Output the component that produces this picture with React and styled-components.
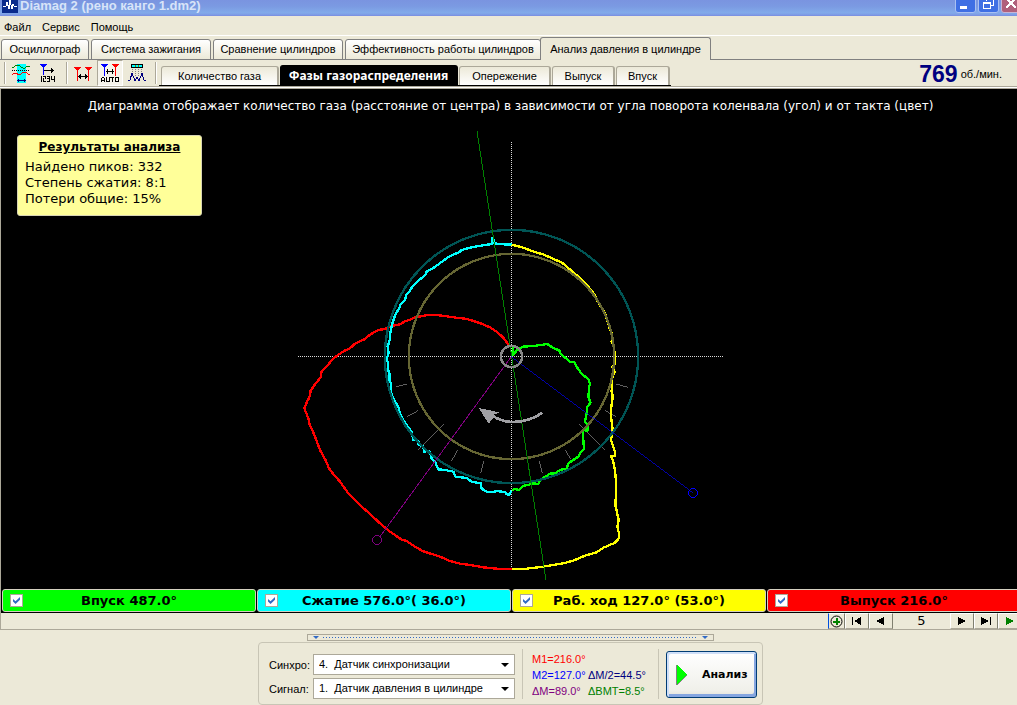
import React, { useState } from 'react';
import styled, { createGlobalStyle, css } from 'styled-components';

const ui = '"Liberation Sans", Arial, sans-serif';
const wide = '"DejaVu Sans", Verdana, sans-serif';

const GlobalStyle = createGlobalStyle`
  * { box-sizing: border-box; }
  html { overflow: hidden; }
  body {
    margin: 0;
    min-height: 100vh;
    overflow: hidden;
    background: #ece9d8;
    color: #000;
    font: 11px/14px ${ui};
  }
  button, select, input { font: inherit; color: inherit; margin: 0; padding: 0; }
  h1, h2, p { margin: 0; font: inherit; }
`;

/* The maximised window runs a little past the right screen edge. */
const Window = styled.div`
  margin-right: -6px;
  background: #ece9d8;
`;

const TitleBar = styled.header`
  display: flex;
  align-items: flex-end;
  height: 16px;
  padding: 0 1px 3px 2px;
  overflow: hidden;
  background: linear-gradient(#7a94e0 0%, #7b9ae2 40%, #82aaea 80%, #7f9fe6 90%, #7a8ce0 100%);
`;
const Title = styled.h1`
  flex: 1;
  margin-left: 2px;
  padding-bottom: 1px;
  color: #d8e4f8;
  font: bold 13px/12px ${ui};
`;
const CaptionButtons = styled.div`
  display: flex;
  gap: 2px;
`;
const CaptionButton = styled.button`
  width: 21px;
  height: 21px;
  border: 1px solid;
  border-color: ${p => (p.$close ? '#c8b4d4' : '#a9c0f2')};
  border-radius: 3px;
  background: ${p => (p.$close ? '#b0607c' : '#3f6fe4')};
  svg { display: block; }
`;

const MenuBar = styled.nav`
  display: flex;
  gap: 11px;
  height: 20px;
  padding: 2px 4px 0;
  border-bottom: 1px solid #fff;
`;
const MenuItem = styled.button`
  border: 0;
  background: none;
  line-height: 14px;
`;

const TabRow = styled.div`
  display: flex;
  align-items: flex-end;
  gap: 2px;
  height: 24px;
  padding-left: 1px;
  box-shadow: inset 0 -1px #808080;
`;
const Tab = styled.button`
  width: ${p => p.$width}px;
  height: 21px;
  padding-bottom: 1px;
  border: 1px solid #808080;
  border-radius: 3px 3px 0 0;
  background: linear-gradient(#fff, #ece9d8);
  white-space: nowrap;
  ${p => p.$active && css`
    height: 23px;
    margin-left: -3px;
    border-bottom: 0;
    background: #ece9d8;
  `}
`;

const Toolbar = styled.div`
  display: flex;
  gap: 1px;
  height: 29px;
  border-bottom: 1px solid #aca899;
  box-shadow: inset 0 -1px #fff, inset 0 -2px #aca899;
`;
const Separator = styled.span`
  width: 2px;
  height: 22px;
  margin: 2px 1px 0 4px;
  border-left: 1px solid #aca899;
  border-right: 1px solid #fff;
`;
const ToolButton = styled.button`
  display: grid;
  place-items: center;
  width: 26px;
  height: 26px;
  border: 1px solid transparent;
  background: none;
  ${p => p.$pressed && css`
    border-color: #aca899 #fff #fff #aca899;
    background: #f6f4ec;
  `}
`;
const SubTabRow = styled.div`
  display: flex;
  align-items: flex-end;
  gap: 1px;
  height: 26px;
  padding: 0 1px 1px 2px;
  box-shadow: inset 0 -1px #000;
`;
const SubTab = styled.button`
  width: ${p => p.$width}px;
  height: 19px;
  border: 1px solid #aca899;
  border-width: 1px 2px 0 1px;
  border-radius: 3px 3px 0 0;
  background: linear-gradient(#ece9d8, #fff);
  white-space: nowrap;
  ${p => p.$active && css`
    height: 20px;
    border-color: #000;
    background: #000;
    color: #fff;
    font: bold 12px/14px "Noto Sans", ${ui};
  `}
`;
const Rpm = styled.div`
  display: flex;
  align-items: center;
  gap: 3px;
  height: 28px;
  margin-left: auto;
  padding-right: 21px;
  strong { color: #000080; font-size: 23px; line-height: 28px; }
`;

const Work = styled.main`
  border: 1px solid #aca899;
  border-width: 0 0 1px 1px;
`;
const Canvas = styled.section`
  position: relative;
  background: #000;
`;
const CanvasCaption = styled.p`
  height: 31px;
  padding: 1px 3px 0 0;
  color: #fff;
  font: 12px/32px ${wide};
  text-align: center;
  white-space: nowrap;
`;
const Results = styled.aside`
  position: absolute;
  left: 16px;
  top: 46px;
  width: 185px;
  padding: 3px 7px 8px;
  border: 1px solid #d8d4b4;
  border-radius: 3px;
  background: #ffff99;
  font: 13px/16px ${wide};
  white-space: nowrap;
`;
const ResultsTitle = styled.h2`
  margin-bottom: 4px;
  font: bold 12px/16px ${wide};
  text-align: center;
  text-decoration: underline;
`;
const Dial = styled.svg`
  display: block;
  width: 444px;
  height: 469px;
  margin: 0 auto;
`;

const Phases = styled.div`
  display: grid;
  grid-template-columns: repeat(4, 1fr);
  gap: 1px;
  padding: 0 2px 1px 1px;
  background: #000;
`;
const Phase = styled.label`
  display: grid;
  grid-template-columns: 1fr auto 1fr;
  align-items: center;
  height: 23px;
  padding: 0 7px;
  border: 1px solid #d4d0c0;
  border-radius: 3px;
  background: ${p => p.$color};
  font: bold 13px/16px ${wide};
  white-space: nowrap;
`;
const Check = styled.input`
  appearance: none;
  display: grid;
  place-items: center;
  width: 13px;
  height: 13px;
  border: 1px solid #aca899;
  background: #fff;
  &:checked::before {
    content: '';
    width: 7px;
    height: 7px;
    background: #316ac5;
    clip-path: polygon(0 28%, 36% 62%, 100% 0, 100% 38%, 36% 100%, 0 66%);
  }
`;

const Pager = styled.div`
  display: flex;
  justify-content: flex-end;
  height: 16px;
  padding-right: 1px;
`;
const PagerButton = styled.button`
  display: grid;
  place-items: center;
  width: ${p => (p.$small ? 17 : 24)}px;
  border: 1px solid;
  border-color: #fff #808070 #aca899 #fff;
  background: #ece9d8;
  ${p => p.$small && css`border-left-color: #0050e0;`}
`;
const PageNumber = styled.output`
  width: 57px;
  font: 13px/16px ${wide};
  text-align: center;
`;

const Footer = styled.footer`
  padding: 4px 2px 0 0;
`;
const Splitter = styled.div`
  display: flex;
  align-items: center;
  gap: 4px;
  width: 407px;
  height: 7px;
  margin: 0 auto 1px;
  padding: 0 5px;
  border: 1px solid #aca899;
`;
const SplitterDots = styled.span`
  flex: 1;
  height: 1px;
  background: repeating-linear-gradient(90deg, #316ac5 0 1px, transparent 1px 3px);
`;
const Panel = styled.form`
  display: flex;
  align-items: center;
  width: 505px;
  height: 63px;
  margin: 0 auto;
  padding: 0 5px 0 10px;
  border: 1px solid #c8c5b5;
  border-radius: 4px;
`;
const Fields = styled.div`
  display: grid;
  grid-template-columns: 44px 202px;
  row-gap: 3px;
  align-items: center;
  padding-top: 6px;
`;
const SelectBox = styled.span`
  display: grid;
  align-items: center;
  > * { grid-area: 1 / 1; }
  svg { justify-self: end; margin-right: 6px; pointer-events: none; }
`;
const Select = styled.select`
  appearance: none;
  height: 21px;
  padding: 0 20px 1px 5px;
  border: 1px solid #aca899;
  border-radius: 0;
  background: #fff;
`;
const PanelRule = styled.span`
  width: 1px;
  height: 50px;
  margin-left: 7px;
  background: #c8c5b5;
`;
const Markers = styled.div`
  display: grid;
  grid-template-columns: 56px 1fr;
  width: 128px;
  padding: 2px 0 0 9px;
  line-height: 16px;
  white-space: nowrap;
`;
const Marker = styled.span`
  grid-column: ${p => p.$column || 1};
  color: ${p => p.$color};
`;
const AnalyzeButton = styled.button`
  display: flex;
  align-items: center;
  gap: 15px;
  width: 91px;
  height: 47px;
  margin: 2px 0 0 auto;
  padding-left: 9px;
  border: 1px solid #003c74;
  border-radius: 3px;
  background: linear-gradient(#fff, #f0f0ea 85%, #e4e2d8);
  box-shadow: inset 2px 2px #cfdff8, inset -2px -3px #86a6e0;
  font: bold 11px/14px ${wide};
`;

/* Traces are sampled at three units per pixel, in four quadrants around the shaft. */
const quadrants = { tl: [0, 300], tr: [630, 300], bl: [0, 810], br: [630, 810] };
const traces = [
  ['tl', '#ff0000', '657,376 640,353 622,337 600,322 575,311 545,301 525,296 505,294 470,289 440,285 410,285 400,288 378,291 360,299 345,304 330,313 300,319 285,327 265,330 240,344 225,357 195,371 180,385 162,393 150,401 140,408 125,420 118,430 100,448 92,460 92,472 75,493 62,512 60,525 55,540'],
  ['bl', '#ff0000', '63,0 60,15 50,38 43,55 55,85 60,108 65,115 75,140 90,180 108,213 117,235 130,252 150,275 175,310 215,350 240,372 270,400 300,425 335,449 350,453 375,470 400,484 450,500 480,513 510,521 540,525 580,532 620,536 665,537'],
  ['tl', '#00ffff', '665,74 640,73 613,70 609,54 606,54 606,72 585,75 545,82 515,90 507,97 480,108 460,122 440,137 425,147 410,155 408,163 390,178 378,190 365,203 358,215 348,225 346,238 332,252 328,265 318,280 312,295 305,318 301,340 299,360 293,380 296,400 290,415 294,430 293,445 298,460 298,480 303,490 303,515 310,540'],
  ['bl', '#00ffff', '300,0 306,18 315,35 325,50 330,70 340,90 350,105 365,125 370,150 385,152 385,163 400,170 403,185 418,182 425,205 435,215 445,238 465,240 490,245 497,260 530,264 545,275 572,280 575,296 590,305 610,306 620,303 645,306 650,313 658,314 664,302'],
  ['br', '#00ff00', '35,300 45,297 57,300 68,288 85,285 100,280 115,282 122,268 140,258 150,251 165,250 180,240 200,236 205,220 215,213 235,200 240,190 252,178 250,150 248,120 262,122 262,105 255,95 260,70 262,50 272,38 264,20 268,0'],
  ['tr', '#00ff00', '267,540 267,500 270,492 266,478 245,462 230,440 222,425 210,425 200,415 190,410 182,402 178,392 155,381 140,371 130,374 100,378 70,380 60,385 50,392 38,405 40,382 36,405'],
  ['tr', '#ffff00', '35,74 60,80 80,87 110,98 130,103 160,117 185,127 200,140 215,153 245,178 265,200 285,225 289,238 304,262 315,280 325,310 328,325 336,340 335,365 341,380 344,400 346,430 337,440 344,455 335,480 335,510 340,540'],
  ['br', '#ffff00', '334,0 338,20 334,50 333,80 338,120 333,150 345,185 345,198 333,198 340,215 345,240 348,275 348,310 346,345 356,390 352,410 357,430 357,445 345,458 325,467 310,473 290,487 255,497 220,512 190,520 160,525 130,530 80,536 35,537'],
];
const ticks = [
  ['tl', 'M317 501L350 492'],
  ['tr', 'M348 492L383 502'],
  ['bl', 'M352 80L384 62M385 180L462 103M485 212L503 181M572 249L581 214'],
  ['br', 'M315 61L347 80M238 103L315 180M196 181L213 208M118 214L127 249'],
];
const shift = q => `translate(${quadrants[q].join(' ')})`;

function GasDial() {
  return (
    <Dial viewBox="0 0 1332 1407" fill="none" shapeRendering="crispEdges" role="img" aria-label="Фазы газораспределения">
      <path d="M24 709.5H1302M664.5 66V1347" stroke="#d8d8d8" strokeWidth="3" strokeDasharray="3 3" />
      {ticks.map(([q, d]) => <path key={q} d={d} transform={shift(q)} stroke="#909090" strokeWidth="2" />)}
      {traces.map(([q, color, points]) => (
        <polyline key={q + color} points={points} transform={shift(q)} stroke={color} strokeWidth="7" strokeLinejoin="round" />
      ))}
      <circle cx="664.5" cy="709.5" r="308" stroke="#666633" strokeWidth="7" />
      <circle cx="664.5" cy="709.5" r="380" stroke="#005555" strokeWidth="7" />
      <g strokeWidth="3">
        <path d="M561 33L768 1380" stroke="#008000" />
        <path d="M664 710L270 1250" stroke="#800080" />
        <circle cx="261" cy="1260" r="13" stroke="#800080" />
        <path d="M664 710L1195 1108L1209 1119" stroke="#0000ff" strokeWidth="2" />
        <circle cx="1209" cy="1119" r="13" stroke="#0000ff" />
      </g>
      <circle cx="664.5" cy="709.5" r="32" stroke="#888888" strokeWidth="7" />
      <path d="M608 888Q638 906 668 906Q718 906 757 878" stroke="#a0a0a4" strokeWidth="8" />
      <path d="M566 864L628 877L612 884L618 894L606 896L597 912Z" fill="#a0a0a4" />
    </Dial>
  );
}

const Icon = ({ w = 20, h = 20, children }) => (
  <svg width={w} height={h} viewBox={`0 0 ${w} ${h}`} fill="none" shapeRendering="crispEdges" aria-hidden="true">{children}</svg>
);
const AppIcon = () => (
  <Icon w={16} h={16}>
    <path d="M0 0H16V16H0Z" fill="#0a2a8c" />
    <path d="M1 9H4L5 5L7 12L8 3L10 12L11 7L12 9H15" stroke="#fff" />
  </Icon>
);
const WavesIcon = () => (
  <Icon>
    <path d="M6 1H15V20H6Z" fill="#00ffff" />
    <path d="M1 4H3L5 2H8L10 4L12 5H14L16 3H19" stroke="#008000" />
    <path d="M1 7.5H19" stroke="#000" strokeDasharray="1 1" />
    <path d="M1 12L3 10H5L8 12L10 11L12 9H15L17 11H19" stroke="#ff0000" />
    <path d="M6 17.5H15M7.500 16V19M13.500 16V19" stroke="#000080" />
  </Icon>
);
const CountIcon = () => (
  <Icon>
    <path d="M2 1H9L6 5H5Z" fill="#0000ff" />
    <path d="M5.500 3V12" stroke="#0000ff" />
    <path d="M6 7.500H16M13.500 5V10M14.500 6V9" stroke="#000" />
    <path d="M3.500 13V19M5 13.500H8M7.500 13V16M5.500 15V19M5 18.500H8M9 13.500H12M11.500 13V19M9 15.500H12M9 18.500H12M13.500 13V16M13 16.500H17M16.500 13V19" stroke="#000" />
  </Icon>
);
const SpanIcon = () => (
  <Icon>
    <path d="M1 4H8L5 8H4ZM12 4H19L16 8H15Z" fill="#ff0000" />
    <path d="M4.500 7V18M15.500 7V18" stroke="#ff0000" />
    <path d="M5 13.500H15M7.500 11V16M12.500 11V16M6.500 12V15M13.500 12V15" stroke="#000" />
  </Icon>
);
const AutoIcon = () => (
  <Icon>
    <path d="M1 1H8L5 5H4Z" fill="#0000ff" />
    <path d="M12 1H19L16 5H15Z" fill="#ff0000" />
    <path d="M4.500 4V13" stroke="#0000ff" />
    <path d="M15.500 4V13" stroke="#ff0000" />
    <path d="M6 8.500H14M7.500 6V11M12.500 6V11" stroke="#000" />
    <path d="M1.500 19V15.500L2.500 14.500H3.500L4.500 15.500V19M2 17.500H4M6.500 14V18.500H9.500V14M10 14.500H14M12.500 14V19M15.500 14.500H18.500V18.500H15.500Z" stroke="#000" />
  </Icon>
);
const PeaksIcon = () => (
  <Icon>
    <path d="M4.500 1.500H15.500V4.500H4.500Z" fill="#00ffff" stroke="#000" />
    <path d="M8 2H9V4H8ZM11 2H12V4H11Z" fill="#808000" />
    <path d="M5.500 6V14M8.500 6V14M11.500 6V14M14.500 6V14" stroke="#808080" strokeDasharray="1 1" />
    <path d="M1 18L3 17L5 10L8 18L10 14L12 18L15 10L17 17L19 18" stroke="#000080" />
  </Icon>
);
const Down = ({ w, color }) => (
  <svg width={w} height={Math.ceil(w / 2)} viewBox="0 0 8 4" aria-hidden="true"><path d="M0 0H8L4 4Z" fill={color} /></svg>
);

const tabs = [
  ['Осциллограф', 88], ['Система зажигания', 120], ['Сравнение цилиндров', 130],
  ['Эффективность работы цилиндров', 196], ['Анализ давления в цилиндре', 171],
];
const subTabs = [
  ['Количество газа', 118], ['Фазы газораспределения', 178], ['Опережение', 92], ['Выпуск', 63], ['Впуск', 54],
];
const tools = [
  [['Сигнал', WavesIcon], ['Номер цилиндра', CountIcon]],
  [['Интервал', SpanIcon], ['Авто', AutoIcon], ['Пики', PeaksIcon]],
];
const phases = [
  ['Впуск 487.0°', '#00ff00'], ['Сжатие 576.0°( 36.0°)', '#00ffff'],
  ['Раб. ход 127.0° (53.0°)', '#ffff00'], ['Выпуск 216.0°', '#ff0000'],
];

export default function App() {
  const [tab, setTab] = useState(4);
  const [subTab, setSubTab] = useState(1);
  const [page, setPage] = useState(5);
  return (
    <>
      <GlobalStyle />
      <Window>
        <TitleBar>
          <AppIcon />
          <Title>Diamag 2 (рено канго 1.dm2)</Title>
          <CaptionButtons>
            <CaptionButton aria-label="Свернуть">
              <Icon w={19} h={19}><path d="M4 13H11V16H4Z" fill="#fff" /></Icon>
            </CaptionButton>
            <CaptionButton aria-label="Восстановить">
              <Icon w={19} h={19}><path d="M4.500 9.500H11.500V15.500H4.500ZM4 10.500H12M7.500 8V6.500H14.500V12.500H12" stroke="#fff" /></Icon>
            </CaptionButton>
            <CaptionButton $close aria-label="Закрыть">
              <Icon w={19} h={19}><path d="M4 5L14 15M14 5L4 15" stroke="#fff" strokeWidth="2" /></Icon>
            </CaptionButton>
          </CaptionButtons>
        </TitleBar>
        <MenuBar>
          {['Файл', 'Сервис', 'Помощь'].map(m => <MenuItem key={m}>{m}</MenuItem>)}
        </MenuBar>
        <TabRow role="tablist">
          {tabs.map(([name, width], i) => (
            <Tab key={name} role="tab" aria-selected={i === tab} $width={width} $active={i === tab} onClick={() => setTab(i)}>{name}</Tab>
          ))}
        </TabRow>
        <Toolbar>
          {tools.map((group, g) => (
            <React.Fragment key={g}>
              <Separator />
              {group.map(([name, Glyph]) => (
                <ToolButton key={name} aria-label={name} $pressed={name === 'Авто'}><Glyph /></ToolButton>
              ))}
            </React.Fragment>
          ))}
          <Separator />
          <SubTabRow role="tablist">
            {subTabs.map(([name, width], i) => (
              <SubTab key={name} role="tab" aria-selected={i === subTab} $width={width} $active={i === subTab} onClick={() => setSubTab(i)}>{name}</SubTab>
            ))}
          </SubTabRow>
          <Rpm><strong>769</strong><span>об./мин.</span></Rpm>
        </Toolbar>
        <Work>
          <Canvas>
            <CanvasCaption>Диаграмма отображает количество газа (расстояние от центра) в зависимости от угла поворота коленвала (угол) и от такта (цвет)</CanvasCaption>
            <GasDial />
            <Results>
              <ResultsTitle>Результаты анализа</ResultsTitle>
              <p>Найдено пиков: 332</p>
              <p>Степень сжатия: 8:1</p>
              <p>Потери общие: 15%</p>
            </Results>
          </Canvas>
          <Phases>
            {phases.map(([name, color]) => (
              <Phase key={name} $color={color}><Check type="checkbox" defaultChecked /><span>{name}</span></Phase>
            ))}
          </Phases>
          <Pager>
            <PagerButton $small aria-label="Добавить">
              <Icon w={13} h={13}>
                <circle cx="6.500" cy="6.500" r="5.500" stroke="#000" shapeRendering="auto" />
                <path d="M6.500 3V10M3 6.500H10" stroke="#008000" strokeWidth="2" />
              </Icon>
            </PagerButton>
            <PagerButton aria-label="Первый" onClick={() => setPage(1)}>
              <Icon w={12} h={8}><path d="M1 0H2V8H1ZM10 0V8L3 4Z" fill="#000" /></Icon>
            </PagerButton>
            <PagerButton aria-label="Предыдущий" onClick={() => setPage(page - 1)}>
              <Icon w={12} h={8}><path d="M9 0V8L1 4Z" fill="#000" /></Icon>
            </PagerButton>
            <PageNumber>{page}</PageNumber>
            <PagerButton aria-label="Следующий" onClick={() => setPage(page + 1)}>
              <Icon w={12} h={8}><path d="M2 0V8L10 4Z" fill="#000" /></Icon>
            </PagerButton>
            <PagerButton aria-label="Последний">
              <Icon w={12} h={8}><path d="M1 0V8L9 4ZM10 0H11V8H10Z" fill="#000" /></Icon>
            </PagerButton>
            <PagerButton aria-label="Воспроизвести">
              <Icon w={12} h={8}><path d="M2 0V8L10 4Z" fill="#008000" /></Icon>
            </PagerButton>
          </Pager>
        </Work>
        <Footer>
          <Splitter><Down w={6} color="#316ac5" /><SplitterDots /><Down w={6} color="#316ac5" /></Splitter>
          <Panel onSubmit={e => e.preventDefault()}>
            <Fields>
              <label htmlFor="sync">Синхро:</label>
              <SelectBox>
                <Select id="sync"><option>4.&nbsp; Датчик синхронизации</option></Select>
                <Down w={8} color="#000" />
              </SelectBox>
              <label htmlFor="signal">Сигнал:</label>
              <SelectBox>
                <Select id="signal"><option>1.&nbsp; Датчик давления в цилиндре</option></Select>
                <Down w={8} color="#000" />
              </SelectBox>
            </Fields>
            <PanelRule />
            <Markers>
              <Marker $color="#ff0000">M1=216.0°</Marker>
              <Marker $color="#0000ff">M2=127.0°</Marker>
              <Marker $color="#000080" $column={2}>ΔM/2=44.5°</Marker>
              <Marker $color="#800080">ΔM=89.0°</Marker>
              <Marker $color="#008000" $column={2}>ΔBMT=8.5°</Marker>
            </Markers>
            <PanelRule />
            <AnalyzeButton type="submit">
              <Icon w={11} h={20}><path d="M0 0H1L11 10L1 20H0Z" fill="#808080" /><path d="M1 0L11 10L1 19Z" fill="#00ff00" /></Icon>
              Анализ
            </AnalyzeButton>
          </Panel>
        </Footer>
      </Window>
    </>
  );
}
